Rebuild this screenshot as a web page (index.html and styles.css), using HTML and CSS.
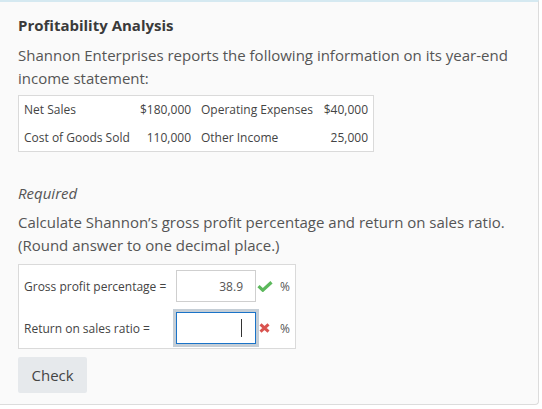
FILE: index.html
```html
<!DOCTYPE html>
<html>
<head>
<meta charset="utf-8">
<title>Profitability Analysis</title>
<link rel="stylesheet" href="styles.css">
</head>
<body>
<div class="card">
  <h2 class="title">Profitability Analysis</h2>
  <p class="text">Shannon Enterprises reports the following information on its year-end income statement:</p>
  <div class="info">
    <div class="cell">Net Sales</div>
    <div class="cell num">$180,000</div>
    <div class="cell">Operating Expenses</div>
    <div class="cell num">$40,000</div>
    <div class="cell">Cost of Goods Sold</div>
    <div class="cell num">110,000</div>
    <div class="cell">Other Income</div>
    <div class="cell num">25,000</div>
  </div>
  <p class="required">Required</p>
  <p class="text calc">Calculate Shannon’s gross profit percentage and return on sales ratio. (Round answer to one decimal place.)</p>
  <div class="answers">
    <div class="label">Gross profit percentage =</div>
    <div class="field">38.9</div>
    <div class="mark"><svg class="ok" width="16" height="11" viewBox="0 0 16 11"><path d="M1.5 5.2 L5.8 9.2 L14.5 1.2" fill="none" stroke="#5cb85c" stroke-width="3.2"/></svg></div>
    <div class="unit">%</div>
    <div class="label">Return on sales ratio =</div>
    <div class="field active"><span class="caret"></span></div>
    <div class="mark"><svg class="bad" width="11" height="10" viewBox="0 0 11 10"><path d="M1.5 1.3 L9.5 8.7 M9.5 1.3 L1.5 8.7" fill="none" stroke="#d9534f" stroke-width="3"/></svg></div>
    <div class="unit">%</div>
  </div>
  <button class="check">Check</button>
</div>
</body>
</html>
```

FILE: styles.css
```css
html, body {
  margin: 0;
  padding: 0;
  background: #ffffff;
}
body {
  font-family: "Open Sans", "Noto Sans", sans-serif;
  color: #555;
}
.card {
  width: 502px;
  background: #fafafa;
  border-top: 2px solid #d5e9f1;
  border-right: 1px solid #dcdcdc;
  border-bottom: 1px solid #dcdcdc;
  border-bottom-right-radius: 4px;
  padding: 13px 18px 11px 18px;
}
.title {
  margin: 0;
  font-size: 15px;
  line-height: 20px;
  font-weight: 700;
  color: #3a3a3a;
}
.text {
  margin: 9px 0 0 0;
  font-size: 15px;
  line-height: 22.5px;
  color: #555;
}
.info {
  margin-top: 6px;
  display: grid;
  grid-template-columns: 116px 61px 121px 56px;
  width: max-content;
  background: #fff;
  border: 1px solid #dadada;
}
.cell {
  font-size: 12px;
  line-height: 27.5px;
  padding: 0 5px;
  color: #444;
  white-space: nowrap;
}
.num {
  text-align: right;
}
.required {
  margin: 30px 0 0 0;
  font-size: 15px;
  line-height: 22.5px;
  font-style: italic;
  color: #555;
}
.calc {
  margin-top: 6.5px;
}
.answers {
  margin-top: 8px;
  display: grid;
  grid-template-columns: 152px 80px 24px auto;
  row-gap: 10px;
  align-items: center;
  width: max-content;
  padding: 5px 5px 4px 5px;
  background: #fff;
  border: 1px solid #dadada;
}
.label {
  font-size: 12px;
  color: #444;
  white-space: nowrap;
}
.field {
  box-sizing: border-box;
  height: 32px;
  border: 1px solid #cfcfcf;
  background: #fff;
  display: flex;
  align-items: center;
  justify-content: flex-end;
  padding-right: 12px;
  font-size: 12px;
  color: #555;
}
.field.active {
  border-color: #1a73c8;
  outline: 3px solid #c5ced6;
  padding-right: 13px;
}
.caret {
  width: 1px;
  height: 18px;
  background: #333;
}
.mark {
  display: flex;
  align-items: center;
  padding-left: 1px;
}
.mark .bad {
  margin-left: 2px;
}
.unit {
  font-size: 12px;
  color: #555;
}
.check {
  margin-top: 8px;
  font-family: "Open Sans", "Noto Sans", sans-serif;
  font-size: 15px;
  line-height: 22.5px;
  color: #444;
  background: #e6e9ec;
  border: none;
  border-radius: 2px;
  padding: 6.5px 13.5px;
  display: block;
}
```
